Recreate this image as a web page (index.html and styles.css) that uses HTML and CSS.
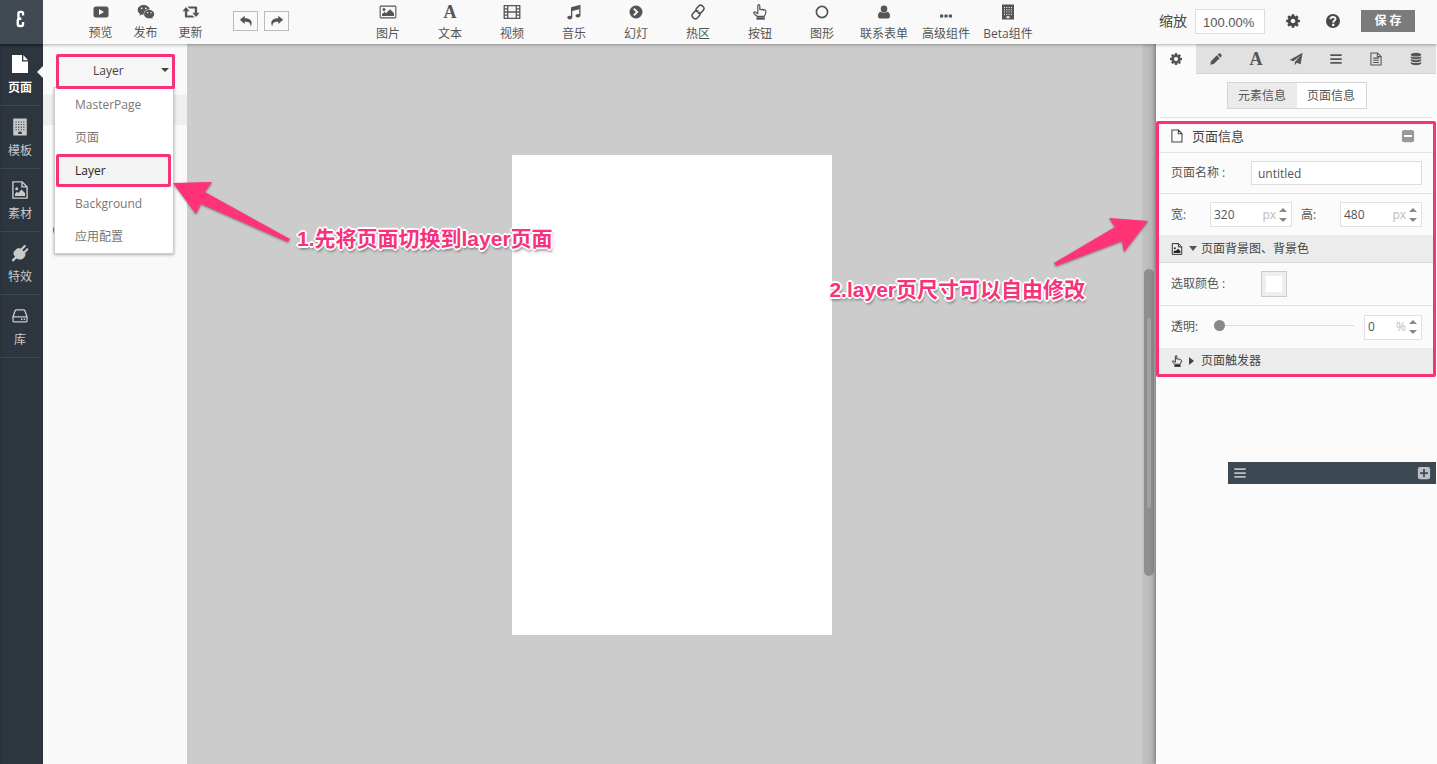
FILE: index.html
```html
<!DOCTYPE html>
<html lang="zh-CN">
<head>
<meta charset="utf-8">
<title>页面编辑器</title>
<link rel="stylesheet" href="styles.css">
</head>
<body>
<svg class="sprite" aria-hidden="true">
  <symbol id="play" viewBox="0 0 16 16"><path fill-rule="evenodd" d="M3 2.500h10q2.500 0 2.500 2.500v6q0 2.500-2.500 2.500H3Q.5 13.500.5 11V5Q.5 2.500 3 2.500zM6 5v6l5-3z"/></symbol>
  <symbol id="wechat" viewBox="0 0 18 16"><path fill-rule="evenodd" d="M6.800 1C3.500 1 .7 3.100.7 5.900c0 1.600.8 2.900 2.300 3.900l-.6 1.900 2.200-1.100c.7.100 1.400.2 2.100.2C6.200 7.700 8.800 5.300 12.900 5.200 12.300 2.700 9.800 1 6.800 1zM4.700 3.500a.8.8 0 1 1 0 1.700.8.8 0 0 1 0-1.700zm4.100 0a.8.8 0 1 1 0 1.700.8.8 0 0 1 0-1.700zM12.300 6c-3 0-5.200 1.900-5.200 4.200s2.300 4.200 5.100 4.200c.6 0 1.200-.1 1.800-.3l1.700.9-.5-1.500c1.200-.9 2-2 2-3.300C17.200 7.900 15.100 6 12.300 6zm-1.700 2a.7.7 0 1 1 0 1.400.7.7 0 0 1 0-1.400zm3.400 0a.7.7 0 1 1 0 1.400.7.7 0 0 1 0-1.400z"/></symbol>
  <symbol id="retweet" viewBox="0 0 18 16"><path d="M4 3L7.600 7.200H5.200v4.300h5.500l1.800 2H3.900c-.6 0-1-.4-1-1V7.200H.5zM14 13l-3.600-4.200h2.400V4.500H7.300l-1.800-2h8.600c.6 0 1 .4 1 1v5.300h2.400z"/></symbol>
  <symbol id="undo" viewBox="0 0 16 16"><path d="M1 6.500L6.500 2v2.900c5 0 8 2 8 5.600 0 1.500-.6 2.700-1.400 3.500.4-3.700-1.500-5.200-6.600-5.200v2.700z"/></symbol>
  <symbol id="redo" viewBox="0 0 16 16"><path d="M15 6.500L9.500 2v2.900c-5 0-8 2-8 5.600 0 1.500.6 2.700 1.400 3.500-.4-3.700 1.500-5.200 6.600-5.200v2.700z"/></symbol>
  <symbol id="image" viewBox="0 0 18 16"><path fill-rule="evenodd" d="M2 1.500h14c.8 0 1.400.6 1.400 1.400v10.200c0 .8-.6 1.400-1.400 1.400H2c-.8 0-1.400-.6-1.400-1.400V2.900C.6 2.100 1.200 1.500 2 1.500zm0 1.200c-.2 0-.3.100-.3.300v10c0 .2.100.3.300.3h14c.2 0 .3-.1.3-.3V3c0-.2-.1-.3-.3-.3zM5 4a1.500 1.500 0 1 1 0 3 1.500 1.500 0 0 1 0-3zm-2 8v-1.800l2.500-2.500L7 9.200l4-4 4 4V12z"/></symbol>
  <symbol id="film" viewBox="0 0 18 16"><path fill="none" stroke="currentColor" stroke-width="1.300" d="M1.200 1.700h15.600v12.600H1.200zM4.700 1.700v12.600M13.300 1.700v12.600M4.700 8h8.600M1.200 4.800h3.500M1.200 8h3.500M1.200 11.200h3.500M13.300 4.800h3.500M13.300 8h3.500M13.300 11.200h3.500"/></symbol>
  <symbol id="music" viewBox="0 0 16 16"><path d="M5 3.300L14.500.8v10.700c0 1.300-1.300 2-2.600 2s-2.400-.7-2.400-1.700 1.100-1.900 2.400-1.900c.5 0 .9.100 1.300.2V5.300L6.300 7v6.500c0 1.100-1.200 1.900-2.600 1.900s-2.400-.7-2.400-1.800 1.100-1.800 2.400-1.800c.5 0 .9.100 1.300.2z"/></symbol>
  <symbol id="chevron" viewBox="0 0 16 16"><path fill-rule="evenodd" d="M8 1.500a6.500 6.500 0 1 1 0 13 6.500 6.500 0 0 1 0-13zM6.500 4L5.200 5.300 7.900 8l-2.700 2.700L6.500 12l4-4z"/></symbol>
  <symbol id="link" viewBox="0 0 16 16"><g fill="none" stroke="currentColor" stroke-width="1.600" stroke-linecap="round"><path d="M6.700 7.400c-1-1.100-.9-2.200 0-3.200l2-2.200c1-1 2.500-1.100 3.600-.1l.9.900c1 1 1 2.400.1 3.500l-2 2.200c-.9 1-2 1.200-3.200.3"/><path d="M9.300 8.600c1 1.100.9 2.200 0 3.200l-2 2.200c-1 1-2.500 1.100-3.600.1l-.9-.9c-1-1-1-2.400-.1-3.500l2-2.200c.9-1 2-1.200 3.200-.3"/></g></symbol>
  <symbol id="hand" viewBox="0 0 16 16"><path fill="none" stroke="currentColor" stroke-width="1.200" stroke-linejoin="round" d="M5.800 9.700L3.300 8C2 7.300 1.200 8.800 2.200 9.700L5 12.300h7.300c.7-1.200 1.600-2.900 1.600-4.800 0-1.400-1.400-2-2.200-1.200-.4-.9-1.500-1.100-2.100-.5-.4-.6-1.300-.7-1.800-.2V1.900C7.800.3 5.800.3 5.800 1.900z"/><path d="M4.500 13.200h8.300v2.500H4.500z"/></symbol>
  <symbol id="ring" viewBox="0 0 16 16"><circle cx="8" cy="8" r="5.600" fill="none" stroke="currentColor" stroke-width="1.700"/></symbol>
  <symbol id="user" viewBox="0 0 16 16"><path d="M8 1.500a3.300 3.300 0 0 1 3.300 3.400C11.300 7 9.800 8.600 8 8.600S4.700 7 4.700 4.900A3.300 3.300 0 0 1 8 1.500zM4.800 7.800c1.800 1.700 4.600 1.700 6.400 0 2.100.1 2.800 2.200 2.800 4.500 0 1.300-.8 2.100-2 2.100H4c-1.200 0-2-.8-2-2.100 0-2.300.7-4.400 2.800-4.500z"/></symbol>
  <symbol id="dots" viewBox="0 0 16 16"><rect x="2" y="10.500" width="3.200" height="3" rx=".6"/><rect x="6.400" y="10.500" width="3.200" height="3" rx=".6"/><rect x="10.800" y="10.500" width="3.200" height="3" rx=".6"/></symbol>
  <symbol id="building" viewBox="0 0 16 16"><path fill-rule="evenodd" d="M2 .5h12v15H2zM4 3h1v1H4zm2.300 0h1v1h-1zm2.300 0h1v1h-1zm2.300 0h1v1h-1zM4 5.300h1v1H4zm2.300 0h1v1h-1zm2.300 0h1v1h-1zm2.300 0h1v1h-1zM4 7.600h1v1H4zm2.300 0h1v1h-1zm2.300 0h1v1h-1zm2.300 0h1v1h-1zM4 9.900h1v1H4zm2.300 0h1v1h-1zm2.300 0h1v1h-1zm2.300 0h1v1h-1zM6.500 12.300h3v2h-3z"/></symbol>
  <symbol id="cog" viewBox="0 0 1792 1792"><path d="M1152 896q0-106-75-181t-181-75-181 75-75 181 75 181 181 75 181-75 75-181zm512-109v222q0 12-8 23t-20 13l-185 28q-19 54-39 91 35 50 107 138 10 12 10 25t-9 23q-27 37-99 108t-94 71q-12 0-26-9l-138-108q-44 23-91 38-16 136-29 186-7 28-36 28h-222q-14 0-24.500-8.500t-11.500-21.500l-28-184q-49-16-90-37l-141 107q-10 9-25 9-14 0-25-11-126-114-165-168-7-10-7-23 0-12 8-23 15-21 51-66.500t54-70.500q-27-50-41-99l-183-27q-13-2-21-12.500t-8-23.500v-222q0-12 8-23t19-13l186-28q14-46 39-92-40-57-107-138-10-12-10-24 0-10 9-23 26-36 98.500-107.500t94.500-71.500q13 0 26 10l138 107q44-23 91-38 16-136 29-186 7-28 36-28h222q14 0 24.500 8.500t11.500 21.500l28 184q49 16 90 37l142-107q9-9 24-9 13 0 25 10 129 119 165 170 7 8 7 22 0 12-8 23-15 21-51 66.500t-54 70.500q26 50 41 98l183 28q13 2 21 12.500t8 23.500z"/></symbol>
  <symbol id="help" viewBox="0 0 16 16"><circle cx="8" cy="8" r="7"/><path fill="none" stroke="#f9f9f9" stroke-width="2" d="M5.500 6.300C5.600 3.200 10.600 3.300 10.500 6 10.400 7.600 8.200 7.700 8.200 9.700"/><path fill="#f9f9f9" d="M7.100 10.800h2.200V13H7.100z"/></symbol>
  <symbol id="pencil" viewBox="0 0 16 16"><path d="M1.500 14.500l.8-4L9 3.800l3.200 3.200-6.700 6.700zM9.800 3l1.300-1.300c.5-.5 1.200-.5 1.700 0l1.500 1.500c.5.500.5 1.200 0 1.700L13 6.200z"/></symbol>
  <symbol id="plane" viewBox="0 0 16 16"><path d="M15.500.8l-2.200 13.300-4.400-1.800-2.300 2.900V11.600l6.300-7.700-7.800 6.800L.8 9.200z"/></symbol>
  <symbol id="bars" viewBox="0 0 16 16"><path d="M1.500 2.500h13v2h-13zM1.500 7h13v2h-13zM1.500 11.500h13v2h-13z"/></symbol>
  <symbol id="doc" viewBox="0 0 16 16"><path fill="none" stroke="currentColor" stroke-width="1.200" d="M2.200 1.100h7.500l4.100 4v9.800H2.200zM9.500 1.100v4.200h4.300M4.700 7h6.600M4.700 9.500h6.600M4.700 12h6.600"/></symbol>
  <symbol id="database" viewBox="0 0 16 16"><path d="M8 .8c3.300 0 6 1 6 2.200S11.300 5.200 8 5.200 2 4.200 2 3 4.700.8 8 .8zM2 4.800c1.200.9 3.500 1.300 6 1.300s4.800-.4 6-1.300v1.400c0 1.200-2.700 2.200-6 2.200s-6-1-6-2.200zM2 8.100c1.200.9 3.500 1.300 6 1.300s4.800-.4 6-1.300v1.400c0 1.200-2.700 2.200-6 2.200s-6-1-6-2.200zM2 11.400c1.200.9 3.500 1.300 6 1.300s4.800-.4 6-1.300v1.400c0 1.200-2.700 2.200-6 2.200s-6-1-6-2.200z"/></symbol>
  <symbol id="file" viewBox="0 0 16 18"><path d="M0 0h10v6.500h6V18H0zM11.300 0L16 5.200h-4.700z"/></symbol>
  <symbol id="file-image" viewBox="0 0 16 18"><path fill="none" stroke="currentColor" stroke-width="1.400" d="M.9.900h9.300l4.900 4.800v11.400H.9zM10 .9v5h5"/><path d="M3 15v-2.200l2-2 1.200 1.100 3.300-3.400L13 12v3zM4.700 6.300a1.500 1.500 0 1 1 0 3 1.500 1.500 0 0 1 0-3z"/></symbol>
  <symbol id="plug" viewBox="0 0 18 18"><path d="M3.200 7.200l1.500-1.500c1.600-1.600 3.500-1.900 5-1.100L13 1.300c1-.9 2.400.4 1.500 1.400l-3.200 3.200 1.400 1.500 2.900-2.900c1-.9 2.400.5 1.500 1.500l-3 3c.8 1.500.4 3.200-1.100 4.700-2.200 2.200-5.100 2.400-7.500.8L2.200 17.800.5 16.100 4 12.700C2.300 10.700 1.800 8.700 3.200 7.200z"/></symbol>
  <symbol id="drive" viewBox="0 0 18 16"><path fill="none" stroke="currentColor" stroke-width="1.300" stroke-linejoin="round" d="M2 8.800L4.100 2.700c.2-.5.500-.8 1-.8h7.800c.5 0 .8.300 1 .8L16 8.800v4c0 .6-.4 1-1 1H3c-.6 0-1-.4-1-1zM2 8.800h14"/><path d="M10 10.600h1.500v1.500H10zM12.700 10.600h1.500v1.500h-1.500z"/></symbol>
  <symbol id="file-o" viewBox="0 0 14 16"><path fill="none" stroke="currentColor" stroke-width="1.200" d="M1.200 1.200h7.500l4 4v9.600H1.200zM8.500 1.200v4.300h4.200"/></symbol>
  <symbol id="minus" viewBox="0 0 16 16"><path fill-rule="evenodd" d="M3.500 1h9Q15 1 15 3.500v9q0 2.500-2.500 2.500h-9Q1 15 1 12.500v-9Q1 1 3.500 1zM3.500 6.800v2.400h9V6.800z"/></symbol>
  <symbol id="plus" viewBox="0 0 16 16"><path fill-rule="evenodd" d="M3.500 1h9Q15 1 15 3.500v9q0 2.500-2.500 2.500h-9Q1 15 1 12.500v-9Q1 1 3.500 1zM7 3.500V7H3.500v2H7v3.500h2V9h3.500V7H9V3.500z"/></symbol>
</svg>

<header class="topbar">
  <a class="logo" href="#" aria-label="首页"><svg viewBox="0 0 12 20"><path fill="none" stroke="#fff" stroke-width="2.600" d="M9.400 6.200V4c0-1.200-.7-1.900-1.800-1.900H6.200c-1.200 0-1.900.7-1.900 1.900v3.600c0 1.200.7 1.900 1.900 1.900h1.300M7.500 9.700H5.500c-1.300 0-2 .8-2 2v4.100c0 1.300.7 2 2 2h1.900c1.300 0 2-.7 2-2v-2.500"/></svg></a>
  <nav class="quick">
    <button class="tool"><svg><use href="#play"/></svg>预览</button>
    <button class="tool"><svg><use href="#wechat"/></svg>发布</button>
    <button class="tool"><svg><use href="#retweet"/></svg>更新</button>
  </nav>
  <div class="history">
    <button aria-label="撤销"><svg><use href="#undo"/></svg></button>
    <button aria-label="重做"><svg><use href="#redo"/></svg></button>
  </div>
  <nav class="widgets">
    <button class="tool"><svg><use href="#image"/></svg>图片</button>
    <button class="tool"><span class="serif-a">A</span>文本</button>
    <button class="tool"><svg><use href="#film"/></svg>视频</button>
    <button class="tool"><svg><use href="#music"/></svg>音乐</button>
    <button class="tool"><svg><use href="#chevron"/></svg>幻灯</button>
    <button class="tool"><svg><use href="#link"/></svg>热区</button>
    <button class="tool"><svg><use href="#hand"/></svg>按钮</button>
    <button class="tool"><svg><use href="#ring"/></svg>图形</button>
    <button class="tool"><svg><use href="#user"/></svg>联系表单</button>
    <button class="tool"><svg><use href="#dots"/></svg>高级组件</button>
    <button class="tool"><svg><use href="#building"/></svg>Beta组件</button>
  </nav>
  <div class="actions">
    <label for="zoom">缩放</label>
    <input id="zoom" class="zoom" value="100.00%">
    <button class="icon-btn" aria-label="设置"><svg><use href="#cog"/></svg></button>
    <button class="icon-btn" aria-label="帮助"><svg><use href="#help"/></svg></button>
    <button class="save">保 存</button>
  </div>
</header>

<div class="workspace">
  <nav class="sidebar">
    <button class="side-item current"><svg><use href="#file"/></svg>页面</button>
    <button class="side-item"><svg><use href="#building"/></svg>模板</button>
    <button class="side-item"><svg><use href="#file-image"/></svg>素材</button>
    <button class="side-item"><svg><use href="#plug"/></svg>特效</button>
    <button class="side-item"><svg><use href="#drive"/></svg>库</button>
  </nav>

  <aside class="pages">
    <div class="picker">
      <select class="page-select" aria-label="页面类型"><option>Layer</option></select>
      <ul class="menu">
        <li><button>MasterPage</button></li>
        <li><button>页面</button></li>
        <li><button class="chosen">Layer</button></li>
        <li><button>Background</button></li>
        <li><button>应用配置</button></li>
      </ul>
    </div>
    <div class="page-row"></div>
    <span class="page-mark"></span>
  </aside>

  <main class="canvas">
    <div class="artboard"></div>
    <div class="scrollbar"><div class="thumb"><div class="grip"></div></div></div>
    <svg class="arrow arrow-left" viewBox="173 180 120 64"><path d="M173 182l39-1-7 10 85 47-2 3-87-38-5 10z"/></svg>
    <p class="note note-left">1.先将页面切换到layer页面</p>
    <svg class="arrow arrow-right" viewBox="1053 217 96 52"><path d="M1148 221l-39-3 6 9-61 36 2 3 66-25 2 11z"/></svg>
    <p class="note note-right">2.layer页尺寸可以自由修改</p>
  </main>

  <aside class="inspector">
    <nav class="tabs">
      <button class="on" aria-label="设置"><svg><use href="#cog"/></svg></button>
      <button aria-label="编辑"><svg><use href="#pencil"/></svg></button>
      <button aria-label="文字"><span class="serif-a">A</span></button>
      <button aria-label="动作"><svg><use href="#plane"/></svg></button>
      <button aria-label="列表"><svg><use href="#bars"/></svg></button>
      <button aria-label="文档"><svg><use href="#doc"/></svg></button>
      <button aria-label="数据"><svg><use href="#database"/></svg></button>
    </nav>
    <div class="segment"><button>元素信息</button><button class="on">页面信息</button></div>
    <section class="props">
      <h2 class="row title"><svg><use href="#file-o"/></svg>页面信息<button class="fold" aria-label="收起"><svg><use href="#minus"/></svg></button></h2>
      <div class="row name-row"><label for="name">页面名称 :</label><input id="name" class="field" value="untitled"></div>
      <div class="row size-row">
        <label for="w">宽:</label><span class="number"><input id="w" value="320"><span class="unit">px</span><i class="spin"></i></span>
        <label for="h">高:</label><span class="number"><input id="h" value="480"><span class="unit">px</span><i class="spin"></i></span>
      </div>
      <h3 class="group"><svg><use href="#file-image"/></svg><i class="caret down"></i>页面背景图、背景色</h3>
      <div class="row color-row"><label for="color">选取颜色 :</label><input id="color" type="color" value="#ffffff"></div>
      <div class="row alpha-row"><label for="alpha">透明:</label><input id="alpha" class="slider" type="range" value="0"><span class="number small"><input aria-label="透明度" value="0"><span class="unit">%</span><i class="spin"></i></span></div>
      <h3 class="group last"><svg><use href="#hand"/></svg><i class="caret"></i>页面触发器</h3>
    </section>
    <div class="layers-bar"><button aria-label="图层"><svg><use href="#bars"/></svg></button><button aria-label="添加"><svg><use href="#plus"/></svg></button></div>
  </aside>
</div>
</body>
</html>
```
FILE: styles.css
```css
* { box-sizing: border-box; }
body {
  margin: 0;
  min-height: 100vh;
  display: flex;
  flex-direction: column;
  overflow: hidden;
  font: 12px/18px "Open Sans", "Noto Sans CJK SC", sans-serif;
  color: #555;
  background: #fbfbfb;
}
button, input, select { font: inherit; color: inherit; margin: 0; }
button { padding: 0; border: 0; background: none; }
h2, h3, p, ul { margin: 0; padding: 0; font-size: 12px; font-weight: normal; list-style: none; }
svg { fill: currentColor; flex: none; }
.sprite { position: absolute; width: 0; height: 0; }
.serif-a { font: bold 18px/16px "Liberation Serif", serif; }

/* Top bar */
.topbar {
  position: relative;
  z-index: 3;
  display: flex;
  align-items: center;
  height: 44px;
  background: #f9f9f9;
  box-shadow: 0 1px 3px rgba(0, 0, 0, .3);
}
.logo {
  width: 43px;
  height: 44px;
  display: flex;
  align-items: center;
  justify-content: center;
  padding: 0 4px 6px 0;
  background: #414952;
}
.logo svg { width: 12px; height: 18px; }
.quick, .widgets { display: flex; }
.quick { margin-left: 35px; }
.widgets { margin-left: 68px; }
.tool {
  width: 62px;
  height: 44px;
  display: flex;
  flex-direction: column;
  align-items: center;
  gap: 5px;
  padding-top: 4px;
  white-space: nowrap;
}
.quick .tool { width: 45px; gap: 4px; }
.tool svg { width: 18px; height: 16px; }
.history { display: flex; gap: 6px; margin: 0 0 2px 20px; }
.history button {
  width: 25px;
  height: 20px;
  display: grid;
  place-items: center;
  border: 1px solid #bbb;
}
.history svg { width: 14px; height: 14px; }
.actions { display: flex; align-items: center; margin: 0 22px 2px auto; }
.actions label { font-size: 14px; margin-right: 8px; color: #444; }
.zoom {
  width: 70px;
  height: 25px;
  padding: 2px 7px 0;
  border: 1px solid #ddd;
  background: #fff;
  font: 13px "Liberation Sans", sans-serif;
}
.icon-btn { width: 16px; height: 16px; margin-left: 20px; }
.icon-btn + .icon-btn { margin-left: 24px; }
.icon-btn svg { display: block; width: 16px; height: 16px; color: #484848; }
.save {
  width: 54px;
  height: 22px;
  margin-left: 20px;
  background: #7b7b7b;
  color: #fff;
  font-weight: bold;
}

.workspace { flex: 1; display: flex; min-height: 720px; }

/* Main navigation */
.sidebar { width: 43px; background: #2d353f; box-shadow: inset 0 2px 2px rgba(0, 0, 0, .2); }
.side-item {
  position: relative;
  width: 40px;
  height: 63px;
  display: flex;
  flex-direction: column;
  align-items: center;
  gap: 6px;
  padding-top: 12px;
  border-bottom: 1px solid #3d4651;
  color: #c9c9c9;
}
.side-item svg { width: 18px; height: 18px; }
.current { height: 62px; padding-top: 11px; color: #fff; font-weight: bold; }
.current::after {
  content: "";
  position: absolute;
  right: -3px;
  top: 22px;
  border: 6px solid transparent;
  border-right-color: #f9f9f9;
  border-left-width: 0;
}

/* Page list */
.pages { position: relative; width: 144px; padding-top: 10px; background: #f9f9f9; }
.picker { position: relative; z-index: 2; margin-left: 13px; width: 119px; }
.page-select {
  display: block;
  width: 119px;
  height: 35px;
  padding: 0 34px 1px;
  appearance: none;
  border: 3px solid #f7327a;
  border-radius: 2px;
  background: #f6f6f6;
  color: #444;
}
.picker::after {
  content: "";
  position: absolute;
  right: 6px;
  top: 14px;
  border: 4px solid transparent;
  border-top-color: #444;
  border-bottom: 0;
}
.menu {
  position: absolute;
  top: 33px;
  left: -2px;
  z-index: -1;
  width: 120px;
  background: #fff;
  border: 1px solid #ccc;
  box-shadow: 0 1px 3px rgba(0, 0, 0, .3);
}
.menu button {
  display: block;
  width: 115px;
  height: 33px;
  margin-left: 1px;
  padding-left: 19px;
  text-align: left;
  color: #777;
}
.menu .chosen {
  padding-left: 16px;
  border: 3px solid #f7327a;
  border-radius: 2px;
  background: #f3f3f3;
  color: #222;
}
.page-row { height: 30px; margin-top: 6px; background: #eee; }
.page-mark {
  display: block;
  width: 8px;
  height: 10px;
  margin: 100px 0 0 10px;
  border: 1px solid #777;
  border-radius: 4px;
}

/* Canvas */
.canvas {
  position: relative;
  flex: 1;
  display: flex;
  justify-content: center;
  align-items: center;
  padding-bottom: 18px;
  background: #ccc;
}
.artboard { width: 320px; height: 480px; background: #fff; }
.scrollbar {
  position: absolute;
  top: 0;
  right: 0;
  bottom: 0;
  width: 14px;
  padding: 225px 2px 0;
  background: linear-gradient(90deg, #c2c2c2, #b3b3b3);
}
.thumb { height: 307px; padding: 49px 3px 0; border-radius: 5px; background: #8e8e8e; }
.grip { height: 190px; border-radius: 2px; background: #a2a2a2; }
.arrow { position: absolute; fill: #ff3375; filter: drop-shadow(0 1px 1px rgba(0, 0, 0, .4)); }
.arrow-left { left: -14px; top: 137px; width: 120px; height: 64px; z-index: 2; }
.arrow-right { right: 7px; top: 173px; width: 96px; height: 52px; }
.note {
  position: absolute;
  font: bold 21px/30px "Liberation Sans", "Noto Sans CJK SC", sans-serif;
  white-space: nowrap;
  color: #f7327a;
  text-shadow: 2px 0 #fff, -2px 0 #fff, 0 2px #fff, 0 -2px #fff, 1px 1px #fff, -1px 1px #fff, 1px -1px #fff, -1px -1px #fff, 1px 3px 3px #666;
}
.note-left { left: 110px; top: 180px; }
.note-right { right: 71px; top: 231px; }

/* Inspector */
.inspector {
  position: relative;
  z-index: 1;
  width: 281px;
  padding-right: 1px;
  background: #fbfbfb;
  box-shadow: -1px 0 4px rgba(0, 0, 0, .35);
}
.tabs { display: flex; background: #e1e1e1; }
.tabs button {
  flex: 1;
  height: 30px;
  display: grid;
  place-items: center;
  border-bottom: 1px solid #d2d2d2;
}
.tabs .on { background: #fbfbfb; border-color: #fbfbfb; }
.tabs svg { width: 14px; height: 14px; }
.segment {
  display: flex;
  justify-content: center;
  padding: 8px 0;
  margin: 0 3px 3px 4px;
  border-bottom: 1px solid #e3e3e3;
}
.segment button { width: 70px; height: 27px; border: 1px solid #d5d5d5; background: #ebebeb; }
.segment button:first-child { border-right: 0; }
.segment .on { background: #fff; border-left: 0; }
.props { border: 3px solid #f7327a; border-radius: 2px; }
.row {
  display: flex;
  align-items: center;
  height: 41px;
  padding: 0 11px 0 12px;
  border-bottom: 1px solid #e3e3e3;
}
.title { height: 29px; padding: 0 18px 4px 11px; font-size: 13px; color: #444; }
.title > svg { width: 14px; height: 14px; margin-right: 8px; }
.fold { margin-left: auto; color: #999; }
.fold svg { display: block; width: 14px; height: 14px; }
.name-row label, .color-row label { width: 80px; }
.field {
  flex: 1;
  min-width: 0;
  height: 24px;
  padding: 0 6px;
  border: 1px solid #ddd;
  background: #fff;
}
.number {
  display: flex;
  align-items: center;
  width: 82px;
  height: 25px;
  padding: 0 4px 0 3px;
  border: 1px solid #e0e0e0;
  background: #fff;
}
.number input { flex: 1; min-width: 0; width: 0; padding: 0; border: 0; background: none; }
.unit { color: #bbb; }
.spin { width: 8px; height: 14px; margin-left: 3px; display: flex; flex-direction: column; justify-content: space-between; }
.spin::before, .spin::after { content: ""; border: 4px solid transparent; }
.spin::before { border-top: 0; border-bottom-color: #888; }
.spin::after { border-bottom: 0; border-top-color: #888; }
.size-row { border: 0; }
.size-row label { width: 39px; }
.size-row .number + label { margin-left: 9px; }
.group {
  display: flex;
  align-items: center;
  height: 28px;
  padding-left: 12px;
  background: #ececec;
  border-bottom: 1px solid #d8d8d8;
  color: #444;
}
.group svg { width: 12px; height: 12px; color: #222; }
.caret { border: 4px solid transparent; border-left: 5px solid #444; border-right: 0; margin: 0 7px 0 6px; }
.caret.down { border: 4px solid transparent; border-top: 5px solid #555; border-bottom: 0; margin: 0 4px 0 6px; }
.last { height: 26px; border: 0; }
.color-row { height: 43px; }
.color-row label { width: 90px; }
.color-row input { width: 26px; height: 26px; padding: 4px; border: 1px solid #ccc; background: #eee; appearance: none; }
.color-row input::-webkit-color-swatch-wrapper { padding: 0; }
.color-row input::-webkit-color-swatch { border: 0; }
.alpha-row { height: 42px; border: 0; }
.alpha-row label { width: 43px; }
.slider { flex: 1; min-width: 0; height: 12px; margin: 0 10px 3px 0; appearance: none; background: linear-gradient(#ddd, #ddd) center / 100% 1px no-repeat; }
.slider::-webkit-slider-thumb { appearance: none; width: 11px; height: 11px; border-radius: 50%; background: #888; }
.small { width: 58px; }
.layers-bar {
  display: flex;
  align-items: center;
  justify-content: space-between;
  height: 22px;
  margin: 85px 0 0 72px;
  padding: 0 5px;
  background: #3d4952;
  color: #b9bfc5;
}
.layers-bar svg { display: block; width: 14px; height: 14px; }
```
